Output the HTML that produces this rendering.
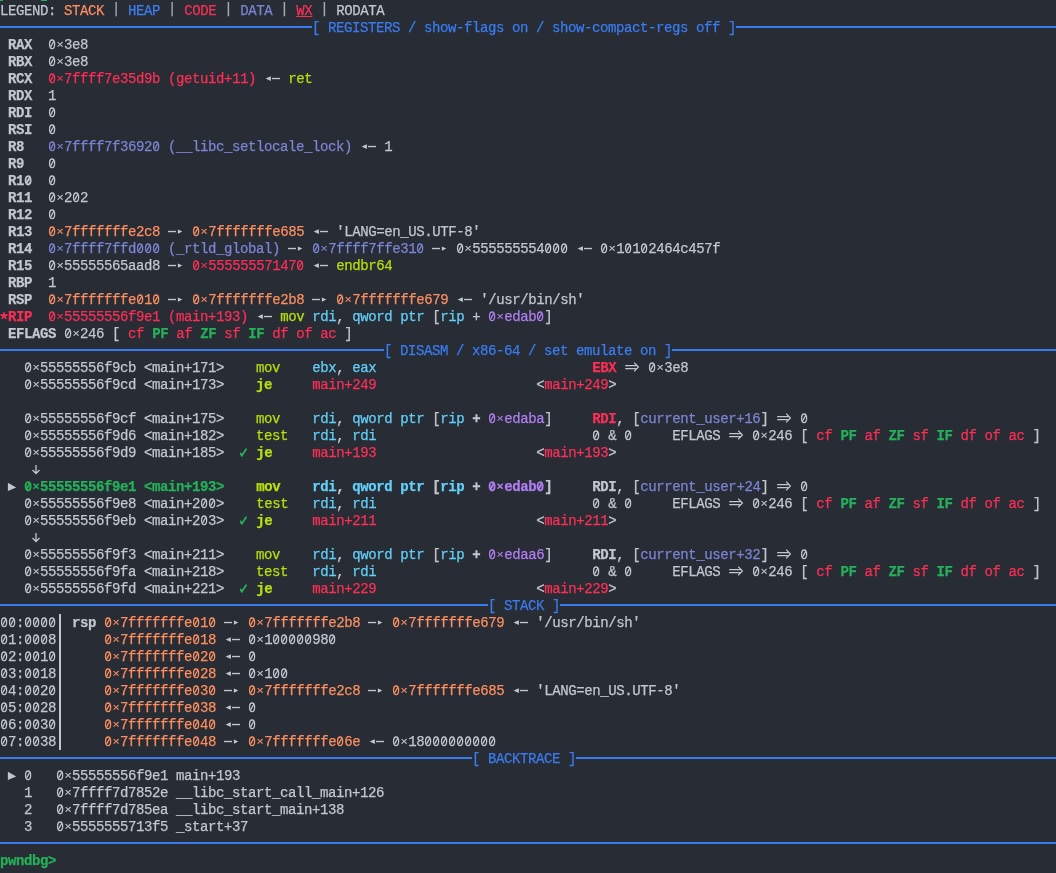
<!DOCTYPE html>
<html><head><meta charset="utf-8"><style>
html,body{margin:0;padding:0;background:#282c34;width:1056px;height:873px;overflow:hidden}
#s{position:relative;will-change:transform;width:1056px;height:873px;overflow:hidden;font-family:"Liberation Mono",monospace;font-size:14px;letter-spacing:-0.4px;-webkit-text-stroke:0.25px currentColor;}
.l{position:absolute;left:0;height:17px;line-height:17px;white-space:pre;color:#c3c6ce}
.g{color:#c3c6ce}.o{color:#fb8e60}.b{color:#3b7ff2}.r{color:#fb2f56}.d{color:#7c84d4}.y{color:#b8de0c}.c{color:#62cff8}.p{color:#b07ef0}.gr{color:#25b05a}
.B{font-weight:bold}
.z{display:inline-block;width:8px;height:17px;vertical-align:top}
.x{display:inline-block;font-weight:inherit;transform:translateY(0.2px) scale(.86,.8);transform-origin:50% 45%}
.u{text-decoration:underline}
.pipe{display:inline-block;transform:translateY(-2px);color:#a3a7b0}
.sp{display:inline-block;vertical-align:top;height:17px;font-style:normal}
.ra,.la,.dr{width:16px}.ck,.pt,.da,.as{width:8px}
.sp svg{display:block}
.rule{position:absolute;height:2px;background:#3a7cf0}
.rt{color:#3a7cf0}
.vb{position:absolute;left:59px;width:2px;background:#c3c6ce}
.dot{position:absolute;background:#25b05a;height:1px;top:0}
</style></head><body><div id="s">
<div class="l" style="top:3px"><span class="g">LEGEND: </span><span class="o">STACK</span><span class="g"> </span><span class="pipe">|</span><span class="g"> </span><span class="b">HEAP</span><span class="g"> </span><span class="pipe">|</span><span class="g"> </span><span class="r">CODE</span><span class="g"> </span><span class="pipe">|</span><span class="g"> </span><span class="d">DATA</span><span class="g"> </span><span class="pipe">|</span><span class="g"> </span><span class="r u">WX</span><span class="g"> </span><span class="pipe">|</span><span class="g"> </span><span class="g">RODATA</span></div>
<div class="rule" style="top:26px;left:0;width:312px"></div>
<div class="rule" style="top:26px;left:736px;width:320px"></div>
<div class="l rt" style="top:20px;left:312px">[ REGISTERS / show-flags on / show-compact-regs off ]</div>
<div class="l" style="top:37px"><span class="g"> </span><span class="B">RAX </span><span class="g"> </span><span class="g"><svg class="z" viewBox="0 0 8 17"><g fill="none" stroke="currentColor" stroke-width="1.3"><ellipse cx="4.1" cy="7.3" rx="2.55" ry="4.3"/><path d="M2.5 10.2L5.7 4.4"/></g></svg><b class="x">×</b>3e8</span></div>
<div class="l" style="top:54px"><span class="g"> </span><span class="B">RBX </span><span class="g"> </span><span class="g"><svg class="z" viewBox="0 0 8 17"><g fill="none" stroke="currentColor" stroke-width="1.3"><ellipse cx="4.1" cy="7.3" rx="2.55" ry="4.3"/><path d="M2.5 10.2L5.7 4.4"/></g></svg><b class="x">×</b>3e8</span></div>
<div class="l" style="top:71px"><span class="g"> </span><span class="B">RCX </span><span class="g"> </span><span class="r"><svg class="z" viewBox="0 0 8 17"><g fill="none" stroke="currentColor" stroke-width="1.3"><ellipse cx="4.1" cy="7.3" rx="2.55" ry="4.3"/><path d="M2.5 10.2L5.7 4.4"/></g></svg><b class="x">×</b>7ffff7e35d9b (getuid+11)</span><span class="g"> </span><i class="sp la g"><svg width="16" height="17" viewBox="0 0 16 17"><rect x="8" y="6.85" width="8" height="1.35" fill="currentColor"/><path d="M6.9 5.2 L1.6 7.55 L6.9 10 Z" fill="currentColor"/></svg></i><span class="g"> </span><span class="y">ret</span></div>
<div class="l" style="top:88px"><span class="g"> </span><span class="B">RDX </span><span class="g"> </span><span class="g">1</span></div>
<div class="l" style="top:105px"><span class="g"> </span><span class="B">RDI </span><span class="g"> </span><span class="g"><svg class="z" viewBox="0 0 8 17"><g fill="none" stroke="currentColor" stroke-width="1.3"><ellipse cx="4.1" cy="7.3" rx="2.55" ry="4.3"/><path d="M2.5 10.2L5.7 4.4"/></g></svg></span></div>
<div class="l" style="top:122px"><span class="g"> </span><span class="B">RSI </span><span class="g"> </span><span class="g"><svg class="z" viewBox="0 0 8 17"><g fill="none" stroke="currentColor" stroke-width="1.3"><ellipse cx="4.1" cy="7.3" rx="2.55" ry="4.3"/><path d="M2.5 10.2L5.7 4.4"/></g></svg></span></div>
<div class="l" style="top:139px"><span class="g"> </span><span class="B">R8  </span><span class="g"> </span><span class="d"><svg class="z" viewBox="0 0 8 17"><g fill="none" stroke="currentColor" stroke-width="1.3"><ellipse cx="4.1" cy="7.3" rx="2.55" ry="4.3"/><path d="M2.5 10.2L5.7 4.4"/></g></svg><b class="x">×</b>7ffff7f3692<svg class="z" viewBox="0 0 8 17"><g fill="none" stroke="currentColor" stroke-width="1.3"><ellipse cx="4.1" cy="7.3" rx="2.55" ry="4.3"/><path d="M2.5 10.2L5.7 4.4"/></g></svg> (__libc_setlocale_lock)</span><span class="g"> </span><i class="sp la g"><svg width="16" height="17" viewBox="0 0 16 17"><rect x="8" y="6.85" width="8" height="1.35" fill="currentColor"/><path d="M6.9 5.2 L1.6 7.55 L6.9 10 Z" fill="currentColor"/></svg></i><span class="g"> 1</span></div>
<div class="l" style="top:156px"><span class="g"> </span><span class="B">R9  </span><span class="g"> </span><span class="g"><svg class="z" viewBox="0 0 8 17"><g fill="none" stroke="currentColor" stroke-width="1.3"><ellipse cx="4.1" cy="7.3" rx="2.55" ry="4.3"/><path d="M2.5 10.2L5.7 4.4"/></g></svg></span></div>
<div class="l" style="top:173px"><span class="g"> </span><span class="B">R1<svg class="z" viewBox="0 0 8 17"><g fill="none" stroke="currentColor" stroke-width="1.9"><ellipse cx="4.1" cy="7.3" rx="2.5" ry="4.2"/><path d="M2.5 10.2L5.7 4.4"/></g></svg> </span><span class="g"> </span><span class="g"><svg class="z" viewBox="0 0 8 17"><g fill="none" stroke="currentColor" stroke-width="1.3"><ellipse cx="4.1" cy="7.3" rx="2.55" ry="4.3"/><path d="M2.5 10.2L5.7 4.4"/></g></svg></span></div>
<div class="l" style="top:190px"><span class="g"> </span><span class="B">R11 </span><span class="g"> </span><span class="g"><svg class="z" viewBox="0 0 8 17"><g fill="none" stroke="currentColor" stroke-width="1.3"><ellipse cx="4.1" cy="7.3" rx="2.55" ry="4.3"/><path d="M2.5 10.2L5.7 4.4"/></g></svg><b class="x">×</b>2<svg class="z" viewBox="0 0 8 17"><g fill="none" stroke="currentColor" stroke-width="1.3"><ellipse cx="4.1" cy="7.3" rx="2.55" ry="4.3"/><path d="M2.5 10.2L5.7 4.4"/></g></svg>2</span></div>
<div class="l" style="top:207px"><span class="g"> </span><span class="B">R12 </span><span class="g"> </span><span class="g"><svg class="z" viewBox="0 0 8 17"><g fill="none" stroke="currentColor" stroke-width="1.3"><ellipse cx="4.1" cy="7.3" rx="2.55" ry="4.3"/><path d="M2.5 10.2L5.7 4.4"/></g></svg></span></div>
<div class="l" style="top:224px"><span class="g"> </span><span class="B">R13 </span><span class="g"> </span><span class="o"><svg class="z" viewBox="0 0 8 17"><g fill="none" stroke="currentColor" stroke-width="1.3"><ellipse cx="4.1" cy="7.3" rx="2.55" ry="4.3"/><path d="M2.5 10.2L5.7 4.4"/></g></svg><b class="x">×</b>7fffffffe2c8</span><span class="g"> </span><i class="sp ra g"><svg width="16" height="17" viewBox="0 0 16 17"><rect x="0" y="6.85" width="8" height="1.35" fill="currentColor"/><path d="M9.9 5.4 L14.3 7.55 L9.9 9.8 Z" fill="currentColor"/></svg></i><span class="g"> </span><span class="o"><svg class="z" viewBox="0 0 8 17"><g fill="none" stroke="currentColor" stroke-width="1.3"><ellipse cx="4.1" cy="7.3" rx="2.55" ry="4.3"/><path d="M2.5 10.2L5.7 4.4"/></g></svg><b class="x">×</b>7fffffffe685</span><span class="g"> </span><i class="sp la g"><svg width="16" height="17" viewBox="0 0 16 17"><rect x="8" y="6.85" width="8" height="1.35" fill="currentColor"/><path d="M6.9 5.2 L1.6 7.55 L6.9 10 Z" fill="currentColor"/></svg></i><span class="g"> &#x27;LANG=en_US.UTF-8&#x27;</span></div>
<div class="l" style="top:241px"><span class="g"> </span><span class="B">R14 </span><span class="g"> </span><span class="d"><svg class="z" viewBox="0 0 8 17"><g fill="none" stroke="currentColor" stroke-width="1.3"><ellipse cx="4.1" cy="7.3" rx="2.55" ry="4.3"/><path d="M2.5 10.2L5.7 4.4"/></g></svg><b class="x">×</b>7ffff7ffd<svg class="z" viewBox="0 0 8 17"><g fill="none" stroke="currentColor" stroke-width="1.3"><ellipse cx="4.1" cy="7.3" rx="2.55" ry="4.3"/><path d="M2.5 10.2L5.7 4.4"/></g></svg><svg class="z" viewBox="0 0 8 17"><g fill="none" stroke="currentColor" stroke-width="1.3"><ellipse cx="4.1" cy="7.3" rx="2.55" ry="4.3"/><path d="M2.5 10.2L5.7 4.4"/></g></svg><svg class="z" viewBox="0 0 8 17"><g fill="none" stroke="currentColor" stroke-width="1.3"><ellipse cx="4.1" cy="7.3" rx="2.55" ry="4.3"/><path d="M2.5 10.2L5.7 4.4"/></g></svg> (_rtld_global)</span><span class="g"> </span><i class="sp ra g"><svg width="16" height="17" viewBox="0 0 16 17"><rect x="0" y="6.85" width="8" height="1.35" fill="currentColor"/><path d="M9.9 5.4 L14.3 7.55 L9.9 9.8 Z" fill="currentColor"/></svg></i><span class="g"> </span><span class="d"><svg class="z" viewBox="0 0 8 17"><g fill="none" stroke="currentColor" stroke-width="1.3"><ellipse cx="4.1" cy="7.3" rx="2.55" ry="4.3"/><path d="M2.5 10.2L5.7 4.4"/></g></svg><b class="x">×</b>7ffff7ffe31<svg class="z" viewBox="0 0 8 17"><g fill="none" stroke="currentColor" stroke-width="1.3"><ellipse cx="4.1" cy="7.3" rx="2.55" ry="4.3"/><path d="M2.5 10.2L5.7 4.4"/></g></svg></span><span class="g"> </span><i class="sp ra g"><svg width="16" height="17" viewBox="0 0 16 17"><rect x="0" y="6.85" width="8" height="1.35" fill="currentColor"/><path d="M9.9 5.4 L14.3 7.55 L9.9 9.8 Z" fill="currentColor"/></svg></i><span class="g"> <svg class="z" viewBox="0 0 8 17"><g fill="none" stroke="currentColor" stroke-width="1.3"><ellipse cx="4.1" cy="7.3" rx="2.55" ry="4.3"/><path d="M2.5 10.2L5.7 4.4"/></g></svg><b class="x">×</b>555555554<svg class="z" viewBox="0 0 8 17"><g fill="none" stroke="currentColor" stroke-width="1.3"><ellipse cx="4.1" cy="7.3" rx="2.55" ry="4.3"/><path d="M2.5 10.2L5.7 4.4"/></g></svg><svg class="z" viewBox="0 0 8 17"><g fill="none" stroke="currentColor" stroke-width="1.3"><ellipse cx="4.1" cy="7.3" rx="2.55" ry="4.3"/><path d="M2.5 10.2L5.7 4.4"/></g></svg><svg class="z" viewBox="0 0 8 17"><g fill="none" stroke="currentColor" stroke-width="1.3"><ellipse cx="4.1" cy="7.3" rx="2.55" ry="4.3"/><path d="M2.5 10.2L5.7 4.4"/></g></svg> </span><i class="sp la g"><svg width="16" height="17" viewBox="0 0 16 17"><rect x="8" y="6.85" width="8" height="1.35" fill="currentColor"/><path d="M6.9 5.2 L1.6 7.55 L6.9 10 Z" fill="currentColor"/></svg></i><span class="g"> <svg class="z" viewBox="0 0 8 17"><g fill="none" stroke="currentColor" stroke-width="1.3"><ellipse cx="4.1" cy="7.3" rx="2.55" ry="4.3"/><path d="M2.5 10.2L5.7 4.4"/></g></svg><b class="x">×</b>1<svg class="z" viewBox="0 0 8 17"><g fill="none" stroke="currentColor" stroke-width="1.3"><ellipse cx="4.1" cy="7.3" rx="2.55" ry="4.3"/><path d="M2.5 10.2L5.7 4.4"/></g></svg>1<svg class="z" viewBox="0 0 8 17"><g fill="none" stroke="currentColor" stroke-width="1.3"><ellipse cx="4.1" cy="7.3" rx="2.55" ry="4.3"/><path d="M2.5 10.2L5.7 4.4"/></g></svg>2464c457f</span></div>
<div class="l" style="top:258px"><span class="g"> </span><span class="B">R15 </span><span class="g"> </span><span class="g"><svg class="z" viewBox="0 0 8 17"><g fill="none" stroke="currentColor" stroke-width="1.3"><ellipse cx="4.1" cy="7.3" rx="2.55" ry="4.3"/><path d="M2.5 10.2L5.7 4.4"/></g></svg><b class="x">×</b>55555565aad8</span><span class="g"> </span><i class="sp ra g"><svg width="16" height="17" viewBox="0 0 16 17"><rect x="0" y="6.85" width="8" height="1.35" fill="currentColor"/><path d="M9.9 5.4 L14.3 7.55 L9.9 9.8 Z" fill="currentColor"/></svg></i><span class="g"> </span><span class="r"><svg class="z" viewBox="0 0 8 17"><g fill="none" stroke="currentColor" stroke-width="1.3"><ellipse cx="4.1" cy="7.3" rx="2.55" ry="4.3"/><path d="M2.5 10.2L5.7 4.4"/></g></svg><b class="x">×</b>55555557147<svg class="z" viewBox="0 0 8 17"><g fill="none" stroke="currentColor" stroke-width="1.3"><ellipse cx="4.1" cy="7.3" rx="2.55" ry="4.3"/><path d="M2.5 10.2L5.7 4.4"/></g></svg></span><span class="g"> </span><i class="sp la g"><svg width="16" height="17" viewBox="0 0 16 17"><rect x="8" y="6.85" width="8" height="1.35" fill="currentColor"/><path d="M6.9 5.2 L1.6 7.55 L6.9 10 Z" fill="currentColor"/></svg></i><span class="g"> </span><span class="y">endbr64</span></div>
<div class="l" style="top:275px"><span class="g"> </span><span class="B">RBP </span><span class="g"> </span><span class="g">1</span></div>
<div class="l" style="top:292px"><span class="g"> </span><span class="B">RSP </span><span class="g"> </span><span class="o"><svg class="z" viewBox="0 0 8 17"><g fill="none" stroke="currentColor" stroke-width="1.3"><ellipse cx="4.1" cy="7.3" rx="2.55" ry="4.3"/><path d="M2.5 10.2L5.7 4.4"/></g></svg><b class="x">×</b>7fffffffe<svg class="z" viewBox="0 0 8 17"><g fill="none" stroke="currentColor" stroke-width="1.3"><ellipse cx="4.1" cy="7.3" rx="2.55" ry="4.3"/><path d="M2.5 10.2L5.7 4.4"/></g></svg>1<svg class="z" viewBox="0 0 8 17"><g fill="none" stroke="currentColor" stroke-width="1.3"><ellipse cx="4.1" cy="7.3" rx="2.55" ry="4.3"/><path d="M2.5 10.2L5.7 4.4"/></g></svg></span><span class="g"> </span><i class="sp ra g"><svg width="16" height="17" viewBox="0 0 16 17"><rect x="0" y="6.85" width="8" height="1.35" fill="currentColor"/><path d="M9.9 5.4 L14.3 7.55 L9.9 9.8 Z" fill="currentColor"/></svg></i><span class="g"> </span><span class="o"><svg class="z" viewBox="0 0 8 17"><g fill="none" stroke="currentColor" stroke-width="1.3"><ellipse cx="4.1" cy="7.3" rx="2.55" ry="4.3"/><path d="M2.5 10.2L5.7 4.4"/></g></svg><b class="x">×</b>7fffffffe2b8</span><span class="g"> </span><i class="sp ra g"><svg width="16" height="17" viewBox="0 0 16 17"><rect x="0" y="6.85" width="8" height="1.35" fill="currentColor"/><path d="M9.9 5.4 L14.3 7.55 L9.9 9.8 Z" fill="currentColor"/></svg></i><span class="g"> </span><span class="o"><svg class="z" viewBox="0 0 8 17"><g fill="none" stroke="currentColor" stroke-width="1.3"><ellipse cx="4.1" cy="7.3" rx="2.55" ry="4.3"/><path d="M2.5 10.2L5.7 4.4"/></g></svg><b class="x">×</b>7fffffffe679</span><span class="g"> </span><i class="sp la g"><svg width="16" height="17" viewBox="0 0 16 17"><rect x="8" y="6.85" width="8" height="1.35" fill="currentColor"/><path d="M6.9 5.2 L1.6 7.55 L6.9 10 Z" fill="currentColor"/></svg></i><span class="g"> &#x27;/usr/bin/sh&#x27;</span></div>
<div class="l" style="top:309px"><i class="sp as r"><svg width="8" height="17" viewBox="0 0 8 17" style="overflow:visible" fill="none" stroke="currentColor" stroke-width="1.7" stroke-linecap="round"><path d="M4 6.8 V3.9 M4 6.8 L1.2 5.9 M4 6.8 L6.8 5.9 M4 6.8 L2.2 9.3 M4 6.8 L5.8 9.3"/></svg></i><span class="r B">RIP</span><span class="g">  </span><span class="r"><svg class="z" viewBox="0 0 8 17"><g fill="none" stroke="currentColor" stroke-width="1.3"><ellipse cx="4.1" cy="7.3" rx="2.55" ry="4.3"/><path d="M2.5 10.2L5.7 4.4"/></g></svg><b class="x">×</b>55555556f9e1 (main+193)</span><span class="g"> </span><i class="sp la g"><svg width="16" height="17" viewBox="0 0 16 17"><rect x="8" y="6.85" width="8" height="1.35" fill="currentColor"/><path d="M6.9 5.2 L1.6 7.55 L6.9 10 Z" fill="currentColor"/></svg></i><span class="g"> </span><span class="y">mov</span><span class="g"> </span><span class="c">rdi</span><span class="g">, </span><span class="c">qword ptr</span><span class="g"> [</span><span class="c">rip</span><span class="g"> + </span><span class="p"><svg class="z" viewBox="0 0 8 17"><g fill="none" stroke="currentColor" stroke-width="1.3"><ellipse cx="4.1" cy="7.3" rx="2.55" ry="4.3"/><path d="M2.5 10.2L5.7 4.4"/></g></svg><b class="x">×</b>edab<svg class="z" viewBox="0 0 8 17"><g fill="none" stroke="currentColor" stroke-width="1.3"><ellipse cx="4.1" cy="7.3" rx="2.55" ry="4.3"/><path d="M2.5 10.2L5.7 4.4"/></g></svg></span><span class="g">]</span></div>
<div class="l" style="top:326px"><span class="g"> </span><span class="B">EFLAGS</span><span class="g"> <svg class="z" viewBox="0 0 8 17"><g fill="none" stroke="currentColor" stroke-width="1.3"><ellipse cx="4.1" cy="7.3" rx="2.55" ry="4.3"/><path d="M2.5 10.2L5.7 4.4"/></g></svg><b class="x">×</b>246 </span><span class="g">[ </span><span class="r">cf</span><span class="g"> </span><span class="gr B">PF</span><span class="g"> </span><span class="r">af</span><span class="g"> </span><span class="gr B">ZF</span><span class="g"> </span><span class="r">sf</span><span class="g"> </span><span class="gr B">IF</span><span class="g"> </span><span class="r">df</span><span class="g"> </span><span class="r">of</span><span class="g"> </span><span class="r">ac</span><span class="g"> ]</span></div>
<div class="rule" style="top:349px;left:0;width:384px"></div>
<div class="rule" style="top:349px;left:672px;width:384px"></div>
<div class="l rt" style="top:343px;left:384px">[ DISASM / x86-64 / set emulate on ]</div>
<div class="l" style="top:360px"><span class="g">   </span><span class="g"><svg class="z" viewBox="0 0 8 17"><g fill="none" stroke="currentColor" stroke-width="1.3"><ellipse cx="4.1" cy="7.3" rx="2.55" ry="4.3"/><path d="M2.5 10.2L5.7 4.4"/></g></svg><b class="x">×</b>55555556f9cb</span><span class="g"> </span><span class="g">&lt;main+171&gt;</span><span class="g">    </span><span class="y">mov</span><span class="g">    </span><span class="c">ebx</span><span class="g">, </span><span class="c">eax</span><span class="g">                           </span><span class="r B">EBX</span><span class="g"> </span><i class="sp dr g"><svg width="16" height="17" viewBox="0 0 16 17" fill="none" stroke="currentColor" stroke-width="1.25"><path d="M1.2 5.5 H12.5 M1.2 8.5 H12.5 M10.2 2.6 L14.4 7 L10.2 11.4"/></svg></i><span class="g"> <svg class="z" viewBox="0 0 8 17"><g fill="none" stroke="currentColor" stroke-width="1.3"><ellipse cx="4.1" cy="7.3" rx="2.55" ry="4.3"/><path d="M2.5 10.2L5.7 4.4"/></g></svg><b class="x">×</b>3e8</span></div>
<div class="l" style="top:377px"><span class="g">   </span><span class="g"><svg class="z" viewBox="0 0 8 17"><g fill="none" stroke="currentColor" stroke-width="1.3"><ellipse cx="4.1" cy="7.3" rx="2.55" ry="4.3"/><path d="M2.5 10.2L5.7 4.4"/></g></svg><b class="x">×</b>55555556f9cd</span><span class="g"> </span><span class="g">&lt;main+173&gt;</span><span class="g">    </span><span class="y B">je</span><span class="g">     </span><span class="r">main+249</span><span class="g">                    </span><span class="g">&lt;</span><span class="r">main+249</span><span class="g">&gt;</span></div>
<div class="l" style="top:411px"><span class="g">   </span><span class="g"><svg class="z" viewBox="0 0 8 17"><g fill="none" stroke="currentColor" stroke-width="1.3"><ellipse cx="4.1" cy="7.3" rx="2.55" ry="4.3"/><path d="M2.5 10.2L5.7 4.4"/></g></svg><b class="x">×</b>55555556f9cf</span><span class="g"> </span><span class="g">&lt;main+175&gt;</span><span class="g">    </span><span class="y">mov</span><span class="g">    </span><span class="c">rdi</span><span class="g">, </span><span class="c">qword ptr</span><span class="g"> </span><span class="g">[</span><span class="c">rip</span><span class="g B"> + </span><span class="p"><svg class="z" viewBox="0 0 8 17"><g fill="none" stroke="currentColor" stroke-width="1.3"><ellipse cx="4.1" cy="7.3" rx="2.55" ry="4.3"/><path d="M2.5 10.2L5.7 4.4"/></g></svg><b class="x">×</b>edaba</span><span class="g">]</span><span class="g">     </span><span class="r B">RDI</span><span class="g">, [</span><span class="d">current_user+16</span><span class="g">] </span><i class="sp dr g"><svg width="16" height="17" viewBox="0 0 16 17" fill="none" stroke="currentColor" stroke-width="1.25"><path d="M1.2 5.5 H12.5 M1.2 8.5 H12.5 M10.2 2.6 L14.4 7 L10.2 11.4"/></svg></i><span class="g"> <svg class="z" viewBox="0 0 8 17"><g fill="none" stroke="currentColor" stroke-width="1.3"><ellipse cx="4.1" cy="7.3" rx="2.55" ry="4.3"/><path d="M2.5 10.2L5.7 4.4"/></g></svg></span></div>
<div class="l" style="top:428px"><span class="g">   </span><span class="g"><svg class="z" viewBox="0 0 8 17"><g fill="none" stroke="currentColor" stroke-width="1.3"><ellipse cx="4.1" cy="7.3" rx="2.55" ry="4.3"/><path d="M2.5 10.2L5.7 4.4"/></g></svg><b class="x">×</b>55555556f9d6</span><span class="g"> </span><span class="g">&lt;main+182&gt;</span><span class="g">    </span><span class="y">test</span><span class="g">   </span><span class="c">rdi</span><span class="g">, </span><span class="c">rdi</span><span class="g">                           </span><span class="g"><svg class="z" viewBox="0 0 8 17"><g fill="none" stroke="currentColor" stroke-width="1.3"><ellipse cx="4.1" cy="7.3" rx="2.55" ry="4.3"/><path d="M2.5 10.2L5.7 4.4"/></g></svg> &amp; <svg class="z" viewBox="0 0 8 17"><g fill="none" stroke="currentColor" stroke-width="1.3"><ellipse cx="4.1" cy="7.3" rx="2.55" ry="4.3"/><path d="M2.5 10.2L5.7 4.4"/></g></svg>     EFLAGS </span><i class="sp dr g"><svg width="16" height="17" viewBox="0 0 16 17" fill="none" stroke="currentColor" stroke-width="1.25"><path d="M1.2 5.5 H12.5 M1.2 8.5 H12.5 M10.2 2.6 L14.4 7 L10.2 11.4"/></svg></i><span class="g"> <svg class="z" viewBox="0 0 8 17"><g fill="none" stroke="currentColor" stroke-width="1.3"><ellipse cx="4.1" cy="7.3" rx="2.55" ry="4.3"/><path d="M2.5 10.2L5.7 4.4"/></g></svg><b class="x">×</b>246 </span><span class="g">[ </span><span class="r">cf</span><span class="g"> </span><span class="gr B">PF</span><span class="g"> </span><span class="r">af</span><span class="g"> </span><span class="gr B">ZF</span><span class="g"> </span><span class="r">sf</span><span class="g"> </span><span class="gr B">IF</span><span class="g"> </span><span class="r">df</span><span class="g"> </span><span class="r">of</span><span class="g"> </span><span class="r">ac</span><span class="g"> ]</span></div>
<div class="l" style="top:445px"><span class="g">   </span><span class="g"><svg class="z" viewBox="0 0 8 17"><g fill="none" stroke="currentColor" stroke-width="1.3"><ellipse cx="4.1" cy="7.3" rx="2.55" ry="4.3"/><path d="M2.5 10.2L5.7 4.4"/></g></svg><b class="x">×</b>55555556f9d9</span><span class="g"> </span><span class="g">&lt;main+185&gt;</span><span class="g">  </span><i class="sp ck gr"><svg width="8" height="17" viewBox="0 0 8 17" style="overflow:visible" fill="none" stroke="currentColor" stroke-width="1.8" stroke-linecap="round" stroke-linejoin="round"><path d="M0.7 8.4 L1.8 10.8 L6.1 4.2"/></svg></i><span class="g"> </span><span class="y B">je</span><span class="g">     </span><span class="r">main+193</span><span class="g">                    </span><span class="g">&lt;</span><span class="r">main+193</span><span class="g">&gt;</span></div>
<div class="l" style="top:462px"><span class="g">    </span><i class="sp da g"><svg width="8" height="17" viewBox="0 0 8 17" fill="none" stroke="currentColor" stroke-width="1.3"><path d="M4 3 V11.3 M0.5 8 L4 11.5 L7.5 8"/></svg></i></div>
<div class="l" style="top:479px"><span class="g"> </span><i class="sp pt g"><svg width="8" height="17" viewBox="0 0 8 17" style="overflow:visible"><path d="M-0.1 3.8 L8.2 8.5 L-0.1 12.1 Z" fill="currentColor"/></svg></i><span class="g"> </span><span class="gr B"><svg class="z" viewBox="0 0 8 17"><g fill="none" stroke="currentColor" stroke-width="1.9"><ellipse cx="4.1" cy="7.3" rx="2.5" ry="4.2"/><path d="M2.5 10.2L5.7 4.4"/></g></svg><b class="x">×</b>55555556f9e1</span><span class="gr B"> </span><span class="gr B">&lt;main+193&gt;</span><span class="g">    </span><span class="y B">mov</span><span class="g">    </span><span class="c B">rdi</span><span class="g B">, </span><span class="c B">qword ptr</span><span class="g B"> </span><span class="g B">[</span><span class="c B">rip</span><span class="g B"> + </span><span class="p B"><svg class="z" viewBox="0 0 8 17"><g fill="none" stroke="currentColor" stroke-width="1.9"><ellipse cx="4.1" cy="7.3" rx="2.5" ry="4.2"/><path d="M2.5 10.2L5.7 4.4"/></g></svg><b class="x">×</b>edab<svg class="z" viewBox="0 0 8 17"><g fill="none" stroke="currentColor" stroke-width="1.9"><ellipse cx="4.1" cy="7.3" rx="2.5" ry="4.2"/><path d="M2.5 10.2L5.7 4.4"/></g></svg></span><span class="g B">]</span><span class="g">     </span><span class="g B">RDI</span><span class="g">, [</span><span class="d">current_user+24</span><span class="g">] </span><i class="sp dr g"><svg width="16" height="17" viewBox="0 0 16 17" fill="none" stroke="currentColor" stroke-width="1.25"><path d="M1.2 5.5 H12.5 M1.2 8.5 H12.5 M10.2 2.6 L14.4 7 L10.2 11.4"/></svg></i><span class="g"> <svg class="z" viewBox="0 0 8 17"><g fill="none" stroke="currentColor" stroke-width="1.3"><ellipse cx="4.1" cy="7.3" rx="2.55" ry="4.3"/><path d="M2.5 10.2L5.7 4.4"/></g></svg></span></div>
<div class="l" style="top:496px"><span class="g">   </span><span class="g"><svg class="z" viewBox="0 0 8 17"><g fill="none" stroke="currentColor" stroke-width="1.3"><ellipse cx="4.1" cy="7.3" rx="2.55" ry="4.3"/><path d="M2.5 10.2L5.7 4.4"/></g></svg><b class="x">×</b>55555556f9e8</span><span class="g"> </span><span class="g">&lt;main+2<svg class="z" viewBox="0 0 8 17"><g fill="none" stroke="currentColor" stroke-width="1.3"><ellipse cx="4.1" cy="7.3" rx="2.55" ry="4.3"/><path d="M2.5 10.2L5.7 4.4"/></g></svg><svg class="z" viewBox="0 0 8 17"><g fill="none" stroke="currentColor" stroke-width="1.3"><ellipse cx="4.1" cy="7.3" rx="2.55" ry="4.3"/><path d="M2.5 10.2L5.7 4.4"/></g></svg>&gt;</span><span class="g">    </span><span class="y">test</span><span class="g">   </span><span class="c">rdi</span><span class="g">, </span><span class="c">rdi</span><span class="g">                           </span><span class="g"><svg class="z" viewBox="0 0 8 17"><g fill="none" stroke="currentColor" stroke-width="1.3"><ellipse cx="4.1" cy="7.3" rx="2.55" ry="4.3"/><path d="M2.5 10.2L5.7 4.4"/></g></svg> &amp; <svg class="z" viewBox="0 0 8 17"><g fill="none" stroke="currentColor" stroke-width="1.3"><ellipse cx="4.1" cy="7.3" rx="2.55" ry="4.3"/><path d="M2.5 10.2L5.7 4.4"/></g></svg>     EFLAGS </span><i class="sp dr g"><svg width="16" height="17" viewBox="0 0 16 17" fill="none" stroke="currentColor" stroke-width="1.25"><path d="M1.2 5.5 H12.5 M1.2 8.5 H12.5 M10.2 2.6 L14.4 7 L10.2 11.4"/></svg></i><span class="g"> <svg class="z" viewBox="0 0 8 17"><g fill="none" stroke="currentColor" stroke-width="1.3"><ellipse cx="4.1" cy="7.3" rx="2.55" ry="4.3"/><path d="M2.5 10.2L5.7 4.4"/></g></svg><b class="x">×</b>246 </span><span class="g">[ </span><span class="r">cf</span><span class="g"> </span><span class="gr B">PF</span><span class="g"> </span><span class="r">af</span><span class="g"> </span><span class="gr B">ZF</span><span class="g"> </span><span class="r">sf</span><span class="g"> </span><span class="gr B">IF</span><span class="g"> </span><span class="r">df</span><span class="g"> </span><span class="r">of</span><span class="g"> </span><span class="r">ac</span><span class="g"> ]</span></div>
<div class="l" style="top:513px"><span class="g">   </span><span class="g"><svg class="z" viewBox="0 0 8 17"><g fill="none" stroke="currentColor" stroke-width="1.3"><ellipse cx="4.1" cy="7.3" rx="2.55" ry="4.3"/><path d="M2.5 10.2L5.7 4.4"/></g></svg><b class="x">×</b>55555556f9eb</span><span class="g"> </span><span class="g">&lt;main+2<svg class="z" viewBox="0 0 8 17"><g fill="none" stroke="currentColor" stroke-width="1.3"><ellipse cx="4.1" cy="7.3" rx="2.55" ry="4.3"/><path d="M2.5 10.2L5.7 4.4"/></g></svg>3&gt;</span><span class="g">  </span><i class="sp ck gr"><svg width="8" height="17" viewBox="0 0 8 17" style="overflow:visible" fill="none" stroke="currentColor" stroke-width="1.8" stroke-linecap="round" stroke-linejoin="round"><path d="M0.7 8.4 L1.8 10.8 L6.1 4.2"/></svg></i><span class="g"> </span><span class="y B">je</span><span class="g">     </span><span class="r">main+211</span><span class="g">                    </span><span class="g">&lt;</span><span class="r">main+211</span><span class="g">&gt;</span></div>
<div class="l" style="top:530px"><span class="g">    </span><i class="sp da g"><svg width="8" height="17" viewBox="0 0 8 17" fill="none" stroke="currentColor" stroke-width="1.3"><path d="M4 3 V11.3 M0.5 8 L4 11.5 L7.5 8"/></svg></i></div>
<div class="l" style="top:547px"><span class="g">   </span><span class="g"><svg class="z" viewBox="0 0 8 17"><g fill="none" stroke="currentColor" stroke-width="1.3"><ellipse cx="4.1" cy="7.3" rx="2.55" ry="4.3"/><path d="M2.5 10.2L5.7 4.4"/></g></svg><b class="x">×</b>55555556f9f3</span><span class="g"> </span><span class="g">&lt;main+211&gt;</span><span class="g">    </span><span class="y">mov</span><span class="g">    </span><span class="c">rdi</span><span class="g">, </span><span class="c">qword ptr</span><span class="g"> </span><span class="g">[</span><span class="c">rip</span><span class="g B"> + </span><span class="p"><svg class="z" viewBox="0 0 8 17"><g fill="none" stroke="currentColor" stroke-width="1.3"><ellipse cx="4.1" cy="7.3" rx="2.55" ry="4.3"/><path d="M2.5 10.2L5.7 4.4"/></g></svg><b class="x">×</b>edaa6</span><span class="g">]</span><span class="g">     </span><span class="g B">RDI</span><span class="g">, [</span><span class="d">current_user+32</span><span class="g">] </span><i class="sp dr g"><svg width="16" height="17" viewBox="0 0 16 17" fill="none" stroke="currentColor" stroke-width="1.25"><path d="M1.2 5.5 H12.5 M1.2 8.5 H12.5 M10.2 2.6 L14.4 7 L10.2 11.4"/></svg></i><span class="g"> <svg class="z" viewBox="0 0 8 17"><g fill="none" stroke="currentColor" stroke-width="1.3"><ellipse cx="4.1" cy="7.3" rx="2.55" ry="4.3"/><path d="M2.5 10.2L5.7 4.4"/></g></svg></span></div>
<div class="l" style="top:564px"><span class="g">   </span><span class="g"><svg class="z" viewBox="0 0 8 17"><g fill="none" stroke="currentColor" stroke-width="1.3"><ellipse cx="4.1" cy="7.3" rx="2.55" ry="4.3"/><path d="M2.5 10.2L5.7 4.4"/></g></svg><b class="x">×</b>55555556f9fa</span><span class="g"> </span><span class="g">&lt;main+218&gt;</span><span class="g">    </span><span class="y">test</span><span class="g">   </span><span class="c">rdi</span><span class="g">, </span><span class="c">rdi</span><span class="g">                           </span><span class="g"><svg class="z" viewBox="0 0 8 17"><g fill="none" stroke="currentColor" stroke-width="1.3"><ellipse cx="4.1" cy="7.3" rx="2.55" ry="4.3"/><path d="M2.5 10.2L5.7 4.4"/></g></svg> &amp; <svg class="z" viewBox="0 0 8 17"><g fill="none" stroke="currentColor" stroke-width="1.3"><ellipse cx="4.1" cy="7.3" rx="2.55" ry="4.3"/><path d="M2.5 10.2L5.7 4.4"/></g></svg>     EFLAGS </span><i class="sp dr g"><svg width="16" height="17" viewBox="0 0 16 17" fill="none" stroke="currentColor" stroke-width="1.25"><path d="M1.2 5.5 H12.5 M1.2 8.5 H12.5 M10.2 2.6 L14.4 7 L10.2 11.4"/></svg></i><span class="g"> <svg class="z" viewBox="0 0 8 17"><g fill="none" stroke="currentColor" stroke-width="1.3"><ellipse cx="4.1" cy="7.3" rx="2.55" ry="4.3"/><path d="M2.5 10.2L5.7 4.4"/></g></svg><b class="x">×</b>246 </span><span class="g">[ </span><span class="r">cf</span><span class="g"> </span><span class="gr B">PF</span><span class="g"> </span><span class="r">af</span><span class="g"> </span><span class="gr B">ZF</span><span class="g"> </span><span class="r">sf</span><span class="g"> </span><span class="gr B">IF</span><span class="g"> </span><span class="r">df</span><span class="g"> </span><span class="r">of</span><span class="g"> </span><span class="r">ac</span><span class="g"> ]</span></div>
<div class="l" style="top:581px"><span class="g">   </span><span class="g"><svg class="z" viewBox="0 0 8 17"><g fill="none" stroke="currentColor" stroke-width="1.3"><ellipse cx="4.1" cy="7.3" rx="2.55" ry="4.3"/><path d="M2.5 10.2L5.7 4.4"/></g></svg><b class="x">×</b>55555556f9fd</span><span class="g"> </span><span class="g">&lt;main+221&gt;</span><span class="g">  </span><i class="sp ck gr"><svg width="8" height="17" viewBox="0 0 8 17" style="overflow:visible" fill="none" stroke="currentColor" stroke-width="1.8" stroke-linecap="round" stroke-linejoin="round"><path d="M0.7 8.4 L1.8 10.8 L6.1 4.2"/></svg></i><span class="g"> </span><span class="y B">je</span><span class="g">     </span><span class="r">main+229</span><span class="g">                    </span><span class="g">&lt;</span><span class="r">main+229</span><span class="g">&gt;</span></div>
<div class="rule" style="top:604px;left:0;width:488px"></div>
<div class="rule" style="top:604px;left:560px;width:496px"></div>
<div class="l rt" style="top:598px;left:488px">[ STACK ]</div>
<div class="l" style="top:615px"><span class="g"><svg class="z" viewBox="0 0 8 17"><g fill="none" stroke="currentColor" stroke-width="1.3"><ellipse cx="4.1" cy="7.3" rx="2.55" ry="4.3"/><path d="M2.5 10.2L5.7 4.4"/></g></svg><svg class="z" viewBox="0 0 8 17"><g fill="none" stroke="currentColor" stroke-width="1.3"><ellipse cx="4.1" cy="7.3" rx="2.55" ry="4.3"/><path d="M2.5 10.2L5.7 4.4"/></g></svg>:<svg class="z" viewBox="0 0 8 17"><g fill="none" stroke="currentColor" stroke-width="1.3"><ellipse cx="4.1" cy="7.3" rx="2.55" ry="4.3"/><path d="M2.5 10.2L5.7 4.4"/></g></svg><svg class="z" viewBox="0 0 8 17"><g fill="none" stroke="currentColor" stroke-width="1.3"><ellipse cx="4.1" cy="7.3" rx="2.55" ry="4.3"/><path d="M2.5 10.2L5.7 4.4"/></g></svg><svg class="z" viewBox="0 0 8 17"><g fill="none" stroke="currentColor" stroke-width="1.3"><ellipse cx="4.1" cy="7.3" rx="2.55" ry="4.3"/><path d="M2.5 10.2L5.7 4.4"/></g></svg><svg class="z" viewBox="0 0 8 17"><g fill="none" stroke="currentColor" stroke-width="1.3"><ellipse cx="4.1" cy="7.3" rx="2.55" ry="4.3"/><path d="M2.5 10.2L5.7 4.4"/></g></svg></span><span class="g"> </span><span class="B"> rsp </span><span class="o"><svg class="z" viewBox="0 0 8 17"><g fill="none" stroke="currentColor" stroke-width="1.3"><ellipse cx="4.1" cy="7.3" rx="2.55" ry="4.3"/><path d="M2.5 10.2L5.7 4.4"/></g></svg><b class="x">×</b>7fffffffe<svg class="z" viewBox="0 0 8 17"><g fill="none" stroke="currentColor" stroke-width="1.3"><ellipse cx="4.1" cy="7.3" rx="2.55" ry="4.3"/><path d="M2.5 10.2L5.7 4.4"/></g></svg>1<svg class="z" viewBox="0 0 8 17"><g fill="none" stroke="currentColor" stroke-width="1.3"><ellipse cx="4.1" cy="7.3" rx="2.55" ry="4.3"/><path d="M2.5 10.2L5.7 4.4"/></g></svg></span><span class="g"> </span><i class="sp ra g"><svg width="16" height="17" viewBox="0 0 16 17"><rect x="0" y="6.85" width="8" height="1.35" fill="currentColor"/><path d="M9.9 5.4 L14.3 7.55 L9.9 9.8 Z" fill="currentColor"/></svg></i><span class="g"> </span><span class="o"><svg class="z" viewBox="0 0 8 17"><g fill="none" stroke="currentColor" stroke-width="1.3"><ellipse cx="4.1" cy="7.3" rx="2.55" ry="4.3"/><path d="M2.5 10.2L5.7 4.4"/></g></svg><b class="x">×</b>7fffffffe2b8</span><span class="g"> </span><i class="sp ra g"><svg width="16" height="17" viewBox="0 0 16 17"><rect x="0" y="6.85" width="8" height="1.35" fill="currentColor"/><path d="M9.9 5.4 L14.3 7.55 L9.9 9.8 Z" fill="currentColor"/></svg></i><span class="g"> </span><span class="o"><svg class="z" viewBox="0 0 8 17"><g fill="none" stroke="currentColor" stroke-width="1.3"><ellipse cx="4.1" cy="7.3" rx="2.55" ry="4.3"/><path d="M2.5 10.2L5.7 4.4"/></g></svg><b class="x">×</b>7fffffffe679</span><span class="g"> </span><i class="sp la g"><svg width="16" height="17" viewBox="0 0 16 17"><rect x="8" y="6.85" width="8" height="1.35" fill="currentColor"/><path d="M6.9 5.2 L1.6 7.55 L6.9 10 Z" fill="currentColor"/></svg></i><span class="g"> &#x27;/usr/bin/sh&#x27;</span></div>
<div class="l" style="top:632px"><span class="g"><svg class="z" viewBox="0 0 8 17"><g fill="none" stroke="currentColor" stroke-width="1.3"><ellipse cx="4.1" cy="7.3" rx="2.55" ry="4.3"/><path d="M2.5 10.2L5.7 4.4"/></g></svg>1:<svg class="z" viewBox="0 0 8 17"><g fill="none" stroke="currentColor" stroke-width="1.3"><ellipse cx="4.1" cy="7.3" rx="2.55" ry="4.3"/><path d="M2.5 10.2L5.7 4.4"/></g></svg><svg class="z" viewBox="0 0 8 17"><g fill="none" stroke="currentColor" stroke-width="1.3"><ellipse cx="4.1" cy="7.3" rx="2.55" ry="4.3"/><path d="M2.5 10.2L5.7 4.4"/></g></svg><svg class="z" viewBox="0 0 8 17"><g fill="none" stroke="currentColor" stroke-width="1.3"><ellipse cx="4.1" cy="7.3" rx="2.55" ry="4.3"/><path d="M2.5 10.2L5.7 4.4"/></g></svg>8</span><span class="g"> </span><span class="g">     </span><span class="o"><svg class="z" viewBox="0 0 8 17"><g fill="none" stroke="currentColor" stroke-width="1.3"><ellipse cx="4.1" cy="7.3" rx="2.55" ry="4.3"/><path d="M2.5 10.2L5.7 4.4"/></g></svg><b class="x">×</b>7fffffffe<svg class="z" viewBox="0 0 8 17"><g fill="none" stroke="currentColor" stroke-width="1.3"><ellipse cx="4.1" cy="7.3" rx="2.55" ry="4.3"/><path d="M2.5 10.2L5.7 4.4"/></g></svg>18</span><span class="g"> </span><i class="sp la g"><svg width="16" height="17" viewBox="0 0 16 17"><rect x="8" y="6.85" width="8" height="1.35" fill="currentColor"/><path d="M6.9 5.2 L1.6 7.55 L6.9 10 Z" fill="currentColor"/></svg></i><span class="g"> <svg class="z" viewBox="0 0 8 17"><g fill="none" stroke="currentColor" stroke-width="1.3"><ellipse cx="4.1" cy="7.3" rx="2.55" ry="4.3"/><path d="M2.5 10.2L5.7 4.4"/></g></svg><b class="x">×</b>1<svg class="z" viewBox="0 0 8 17"><g fill="none" stroke="currentColor" stroke-width="1.3"><ellipse cx="4.1" cy="7.3" rx="2.55" ry="4.3"/><path d="M2.5 10.2L5.7 4.4"/></g></svg><svg class="z" viewBox="0 0 8 17"><g fill="none" stroke="currentColor" stroke-width="1.3"><ellipse cx="4.1" cy="7.3" rx="2.55" ry="4.3"/><path d="M2.5 10.2L5.7 4.4"/></g></svg><svg class="z" viewBox="0 0 8 17"><g fill="none" stroke="currentColor" stroke-width="1.3"><ellipse cx="4.1" cy="7.3" rx="2.55" ry="4.3"/><path d="M2.5 10.2L5.7 4.4"/></g></svg><svg class="z" viewBox="0 0 8 17"><g fill="none" stroke="currentColor" stroke-width="1.3"><ellipse cx="4.1" cy="7.3" rx="2.55" ry="4.3"/><path d="M2.5 10.2L5.7 4.4"/></g></svg><svg class="z" viewBox="0 0 8 17"><g fill="none" stroke="currentColor" stroke-width="1.3"><ellipse cx="4.1" cy="7.3" rx="2.55" ry="4.3"/><path d="M2.5 10.2L5.7 4.4"/></g></svg>98<svg class="z" viewBox="0 0 8 17"><g fill="none" stroke="currentColor" stroke-width="1.3"><ellipse cx="4.1" cy="7.3" rx="2.55" ry="4.3"/><path d="M2.5 10.2L5.7 4.4"/></g></svg></span></div>
<div class="l" style="top:649px"><span class="g"><svg class="z" viewBox="0 0 8 17"><g fill="none" stroke="currentColor" stroke-width="1.3"><ellipse cx="4.1" cy="7.3" rx="2.55" ry="4.3"/><path d="M2.5 10.2L5.7 4.4"/></g></svg>2:<svg class="z" viewBox="0 0 8 17"><g fill="none" stroke="currentColor" stroke-width="1.3"><ellipse cx="4.1" cy="7.3" rx="2.55" ry="4.3"/><path d="M2.5 10.2L5.7 4.4"/></g></svg><svg class="z" viewBox="0 0 8 17"><g fill="none" stroke="currentColor" stroke-width="1.3"><ellipse cx="4.1" cy="7.3" rx="2.55" ry="4.3"/><path d="M2.5 10.2L5.7 4.4"/></g></svg>1<svg class="z" viewBox="0 0 8 17"><g fill="none" stroke="currentColor" stroke-width="1.3"><ellipse cx="4.1" cy="7.3" rx="2.55" ry="4.3"/><path d="M2.5 10.2L5.7 4.4"/></g></svg></span><span class="g"> </span><span class="g">     </span><span class="o"><svg class="z" viewBox="0 0 8 17"><g fill="none" stroke="currentColor" stroke-width="1.3"><ellipse cx="4.1" cy="7.3" rx="2.55" ry="4.3"/><path d="M2.5 10.2L5.7 4.4"/></g></svg><b class="x">×</b>7fffffffe<svg class="z" viewBox="0 0 8 17"><g fill="none" stroke="currentColor" stroke-width="1.3"><ellipse cx="4.1" cy="7.3" rx="2.55" ry="4.3"/><path d="M2.5 10.2L5.7 4.4"/></g></svg>2<svg class="z" viewBox="0 0 8 17"><g fill="none" stroke="currentColor" stroke-width="1.3"><ellipse cx="4.1" cy="7.3" rx="2.55" ry="4.3"/><path d="M2.5 10.2L5.7 4.4"/></g></svg></span><span class="g"> </span><i class="sp la g"><svg width="16" height="17" viewBox="0 0 16 17"><rect x="8" y="6.85" width="8" height="1.35" fill="currentColor"/><path d="M6.9 5.2 L1.6 7.55 L6.9 10 Z" fill="currentColor"/></svg></i><span class="g"> <svg class="z" viewBox="0 0 8 17"><g fill="none" stroke="currentColor" stroke-width="1.3"><ellipse cx="4.1" cy="7.3" rx="2.55" ry="4.3"/><path d="M2.5 10.2L5.7 4.4"/></g></svg></span></div>
<div class="l" style="top:666px"><span class="g"><svg class="z" viewBox="0 0 8 17"><g fill="none" stroke="currentColor" stroke-width="1.3"><ellipse cx="4.1" cy="7.3" rx="2.55" ry="4.3"/><path d="M2.5 10.2L5.7 4.4"/></g></svg>3:<svg class="z" viewBox="0 0 8 17"><g fill="none" stroke="currentColor" stroke-width="1.3"><ellipse cx="4.1" cy="7.3" rx="2.55" ry="4.3"/><path d="M2.5 10.2L5.7 4.4"/></g></svg><svg class="z" viewBox="0 0 8 17"><g fill="none" stroke="currentColor" stroke-width="1.3"><ellipse cx="4.1" cy="7.3" rx="2.55" ry="4.3"/><path d="M2.5 10.2L5.7 4.4"/></g></svg>18</span><span class="g"> </span><span class="g">     </span><span class="o"><svg class="z" viewBox="0 0 8 17"><g fill="none" stroke="currentColor" stroke-width="1.3"><ellipse cx="4.1" cy="7.3" rx="2.55" ry="4.3"/><path d="M2.5 10.2L5.7 4.4"/></g></svg><b class="x">×</b>7fffffffe<svg class="z" viewBox="0 0 8 17"><g fill="none" stroke="currentColor" stroke-width="1.3"><ellipse cx="4.1" cy="7.3" rx="2.55" ry="4.3"/><path d="M2.5 10.2L5.7 4.4"/></g></svg>28</span><span class="g"> </span><i class="sp la g"><svg width="16" height="17" viewBox="0 0 16 17"><rect x="8" y="6.85" width="8" height="1.35" fill="currentColor"/><path d="M6.9 5.2 L1.6 7.55 L6.9 10 Z" fill="currentColor"/></svg></i><span class="g"> <svg class="z" viewBox="0 0 8 17"><g fill="none" stroke="currentColor" stroke-width="1.3"><ellipse cx="4.1" cy="7.3" rx="2.55" ry="4.3"/><path d="M2.5 10.2L5.7 4.4"/></g></svg><b class="x">×</b>1<svg class="z" viewBox="0 0 8 17"><g fill="none" stroke="currentColor" stroke-width="1.3"><ellipse cx="4.1" cy="7.3" rx="2.55" ry="4.3"/><path d="M2.5 10.2L5.7 4.4"/></g></svg><svg class="z" viewBox="0 0 8 17"><g fill="none" stroke="currentColor" stroke-width="1.3"><ellipse cx="4.1" cy="7.3" rx="2.55" ry="4.3"/><path d="M2.5 10.2L5.7 4.4"/></g></svg></span></div>
<div class="l" style="top:683px"><span class="g"><svg class="z" viewBox="0 0 8 17"><g fill="none" stroke="currentColor" stroke-width="1.3"><ellipse cx="4.1" cy="7.3" rx="2.55" ry="4.3"/><path d="M2.5 10.2L5.7 4.4"/></g></svg>4:<svg class="z" viewBox="0 0 8 17"><g fill="none" stroke="currentColor" stroke-width="1.3"><ellipse cx="4.1" cy="7.3" rx="2.55" ry="4.3"/><path d="M2.5 10.2L5.7 4.4"/></g></svg><svg class="z" viewBox="0 0 8 17"><g fill="none" stroke="currentColor" stroke-width="1.3"><ellipse cx="4.1" cy="7.3" rx="2.55" ry="4.3"/><path d="M2.5 10.2L5.7 4.4"/></g></svg>2<svg class="z" viewBox="0 0 8 17"><g fill="none" stroke="currentColor" stroke-width="1.3"><ellipse cx="4.1" cy="7.3" rx="2.55" ry="4.3"/><path d="M2.5 10.2L5.7 4.4"/></g></svg></span><span class="g"> </span><span class="g">     </span><span class="o"><svg class="z" viewBox="0 0 8 17"><g fill="none" stroke="currentColor" stroke-width="1.3"><ellipse cx="4.1" cy="7.3" rx="2.55" ry="4.3"/><path d="M2.5 10.2L5.7 4.4"/></g></svg><b class="x">×</b>7fffffffe<svg class="z" viewBox="0 0 8 17"><g fill="none" stroke="currentColor" stroke-width="1.3"><ellipse cx="4.1" cy="7.3" rx="2.55" ry="4.3"/><path d="M2.5 10.2L5.7 4.4"/></g></svg>3<svg class="z" viewBox="0 0 8 17"><g fill="none" stroke="currentColor" stroke-width="1.3"><ellipse cx="4.1" cy="7.3" rx="2.55" ry="4.3"/><path d="M2.5 10.2L5.7 4.4"/></g></svg></span><span class="g"> </span><i class="sp ra g"><svg width="16" height="17" viewBox="0 0 16 17"><rect x="0" y="6.85" width="8" height="1.35" fill="currentColor"/><path d="M9.9 5.4 L14.3 7.55 L9.9 9.8 Z" fill="currentColor"/></svg></i><span class="g"> </span><span class="o"><svg class="z" viewBox="0 0 8 17"><g fill="none" stroke="currentColor" stroke-width="1.3"><ellipse cx="4.1" cy="7.3" rx="2.55" ry="4.3"/><path d="M2.5 10.2L5.7 4.4"/></g></svg><b class="x">×</b>7fffffffe2c8</span><span class="g"> </span><i class="sp ra g"><svg width="16" height="17" viewBox="0 0 16 17"><rect x="0" y="6.85" width="8" height="1.35" fill="currentColor"/><path d="M9.9 5.4 L14.3 7.55 L9.9 9.8 Z" fill="currentColor"/></svg></i><span class="g"> </span><span class="o"><svg class="z" viewBox="0 0 8 17"><g fill="none" stroke="currentColor" stroke-width="1.3"><ellipse cx="4.1" cy="7.3" rx="2.55" ry="4.3"/><path d="M2.5 10.2L5.7 4.4"/></g></svg><b class="x">×</b>7fffffffe685</span><span class="g"> </span><i class="sp la g"><svg width="16" height="17" viewBox="0 0 16 17"><rect x="8" y="6.85" width="8" height="1.35" fill="currentColor"/><path d="M6.9 5.2 L1.6 7.55 L6.9 10 Z" fill="currentColor"/></svg></i><span class="g"> &#x27;LANG=en_US.UTF-8&#x27;</span></div>
<div class="l" style="top:700px"><span class="g"><svg class="z" viewBox="0 0 8 17"><g fill="none" stroke="currentColor" stroke-width="1.3"><ellipse cx="4.1" cy="7.3" rx="2.55" ry="4.3"/><path d="M2.5 10.2L5.7 4.4"/></g></svg>5:<svg class="z" viewBox="0 0 8 17"><g fill="none" stroke="currentColor" stroke-width="1.3"><ellipse cx="4.1" cy="7.3" rx="2.55" ry="4.3"/><path d="M2.5 10.2L5.7 4.4"/></g></svg><svg class="z" viewBox="0 0 8 17"><g fill="none" stroke="currentColor" stroke-width="1.3"><ellipse cx="4.1" cy="7.3" rx="2.55" ry="4.3"/><path d="M2.5 10.2L5.7 4.4"/></g></svg>28</span><span class="g"> </span><span class="g">     </span><span class="o"><svg class="z" viewBox="0 0 8 17"><g fill="none" stroke="currentColor" stroke-width="1.3"><ellipse cx="4.1" cy="7.3" rx="2.55" ry="4.3"/><path d="M2.5 10.2L5.7 4.4"/></g></svg><b class="x">×</b>7fffffffe<svg class="z" viewBox="0 0 8 17"><g fill="none" stroke="currentColor" stroke-width="1.3"><ellipse cx="4.1" cy="7.3" rx="2.55" ry="4.3"/><path d="M2.5 10.2L5.7 4.4"/></g></svg>38</span><span class="g"> </span><i class="sp la g"><svg width="16" height="17" viewBox="0 0 16 17"><rect x="8" y="6.85" width="8" height="1.35" fill="currentColor"/><path d="M6.9 5.2 L1.6 7.55 L6.9 10 Z" fill="currentColor"/></svg></i><span class="g"> <svg class="z" viewBox="0 0 8 17"><g fill="none" stroke="currentColor" stroke-width="1.3"><ellipse cx="4.1" cy="7.3" rx="2.55" ry="4.3"/><path d="M2.5 10.2L5.7 4.4"/></g></svg></span></div>
<div class="l" style="top:717px"><span class="g"><svg class="z" viewBox="0 0 8 17"><g fill="none" stroke="currentColor" stroke-width="1.3"><ellipse cx="4.1" cy="7.3" rx="2.55" ry="4.3"/><path d="M2.5 10.2L5.7 4.4"/></g></svg>6:<svg class="z" viewBox="0 0 8 17"><g fill="none" stroke="currentColor" stroke-width="1.3"><ellipse cx="4.1" cy="7.3" rx="2.55" ry="4.3"/><path d="M2.5 10.2L5.7 4.4"/></g></svg><svg class="z" viewBox="0 0 8 17"><g fill="none" stroke="currentColor" stroke-width="1.3"><ellipse cx="4.1" cy="7.3" rx="2.55" ry="4.3"/><path d="M2.5 10.2L5.7 4.4"/></g></svg>3<svg class="z" viewBox="0 0 8 17"><g fill="none" stroke="currentColor" stroke-width="1.3"><ellipse cx="4.1" cy="7.3" rx="2.55" ry="4.3"/><path d="M2.5 10.2L5.7 4.4"/></g></svg></span><span class="g"> </span><span class="g">     </span><span class="o"><svg class="z" viewBox="0 0 8 17"><g fill="none" stroke="currentColor" stroke-width="1.3"><ellipse cx="4.1" cy="7.3" rx="2.55" ry="4.3"/><path d="M2.5 10.2L5.7 4.4"/></g></svg><b class="x">×</b>7fffffffe<svg class="z" viewBox="0 0 8 17"><g fill="none" stroke="currentColor" stroke-width="1.3"><ellipse cx="4.1" cy="7.3" rx="2.55" ry="4.3"/><path d="M2.5 10.2L5.7 4.4"/></g></svg>4<svg class="z" viewBox="0 0 8 17"><g fill="none" stroke="currentColor" stroke-width="1.3"><ellipse cx="4.1" cy="7.3" rx="2.55" ry="4.3"/><path d="M2.5 10.2L5.7 4.4"/></g></svg></span><span class="g"> </span><i class="sp la g"><svg width="16" height="17" viewBox="0 0 16 17"><rect x="8" y="6.85" width="8" height="1.35" fill="currentColor"/><path d="M6.9 5.2 L1.6 7.55 L6.9 10 Z" fill="currentColor"/></svg></i><span class="g"> <svg class="z" viewBox="0 0 8 17"><g fill="none" stroke="currentColor" stroke-width="1.3"><ellipse cx="4.1" cy="7.3" rx="2.55" ry="4.3"/><path d="M2.5 10.2L5.7 4.4"/></g></svg></span></div>
<div class="l" style="top:734px"><span class="g"><svg class="z" viewBox="0 0 8 17"><g fill="none" stroke="currentColor" stroke-width="1.3"><ellipse cx="4.1" cy="7.3" rx="2.55" ry="4.3"/><path d="M2.5 10.2L5.7 4.4"/></g></svg>7:<svg class="z" viewBox="0 0 8 17"><g fill="none" stroke="currentColor" stroke-width="1.3"><ellipse cx="4.1" cy="7.3" rx="2.55" ry="4.3"/><path d="M2.5 10.2L5.7 4.4"/></g></svg><svg class="z" viewBox="0 0 8 17"><g fill="none" stroke="currentColor" stroke-width="1.3"><ellipse cx="4.1" cy="7.3" rx="2.55" ry="4.3"/><path d="M2.5 10.2L5.7 4.4"/></g></svg>38</span><span class="g"> </span><span class="g">     </span><span class="o"><svg class="z" viewBox="0 0 8 17"><g fill="none" stroke="currentColor" stroke-width="1.3"><ellipse cx="4.1" cy="7.3" rx="2.55" ry="4.3"/><path d="M2.5 10.2L5.7 4.4"/></g></svg><b class="x">×</b>7fffffffe<svg class="z" viewBox="0 0 8 17"><g fill="none" stroke="currentColor" stroke-width="1.3"><ellipse cx="4.1" cy="7.3" rx="2.55" ry="4.3"/><path d="M2.5 10.2L5.7 4.4"/></g></svg>48</span><span class="g"> </span><i class="sp ra g"><svg width="16" height="17" viewBox="0 0 16 17"><rect x="0" y="6.85" width="8" height="1.35" fill="currentColor"/><path d="M9.9 5.4 L14.3 7.55 L9.9 9.8 Z" fill="currentColor"/></svg></i><span class="g"> </span><span class="o"><svg class="z" viewBox="0 0 8 17"><g fill="none" stroke="currentColor" stroke-width="1.3"><ellipse cx="4.1" cy="7.3" rx="2.55" ry="4.3"/><path d="M2.5 10.2L5.7 4.4"/></g></svg><b class="x">×</b>7fffffffe<svg class="z" viewBox="0 0 8 17"><g fill="none" stroke="currentColor" stroke-width="1.3"><ellipse cx="4.1" cy="7.3" rx="2.55" ry="4.3"/><path d="M2.5 10.2L5.7 4.4"/></g></svg>6e</span><span class="g"> </span><i class="sp la g"><svg width="16" height="17" viewBox="0 0 16 17"><rect x="8" y="6.85" width="8" height="1.35" fill="currentColor"/><path d="M6.9 5.2 L1.6 7.55 L6.9 10 Z" fill="currentColor"/></svg></i><span class="g"> <svg class="z" viewBox="0 0 8 17"><g fill="none" stroke="currentColor" stroke-width="1.3"><ellipse cx="4.1" cy="7.3" rx="2.55" ry="4.3"/><path d="M2.5 10.2L5.7 4.4"/></g></svg><b class="x">×</b>18<svg class="z" viewBox="0 0 8 17"><g fill="none" stroke="currentColor" stroke-width="1.3"><ellipse cx="4.1" cy="7.3" rx="2.55" ry="4.3"/><path d="M2.5 10.2L5.7 4.4"/></g></svg><svg class="z" viewBox="0 0 8 17"><g fill="none" stroke="currentColor" stroke-width="1.3"><ellipse cx="4.1" cy="7.3" rx="2.55" ry="4.3"/><path d="M2.5 10.2L5.7 4.4"/></g></svg><svg class="z" viewBox="0 0 8 17"><g fill="none" stroke="currentColor" stroke-width="1.3"><ellipse cx="4.1" cy="7.3" rx="2.55" ry="4.3"/><path d="M2.5 10.2L5.7 4.4"/></g></svg><svg class="z" viewBox="0 0 8 17"><g fill="none" stroke="currentColor" stroke-width="1.3"><ellipse cx="4.1" cy="7.3" rx="2.55" ry="4.3"/><path d="M2.5 10.2L5.7 4.4"/></g></svg><svg class="z" viewBox="0 0 8 17"><g fill="none" stroke="currentColor" stroke-width="1.3"><ellipse cx="4.1" cy="7.3" rx="2.55" ry="4.3"/><path d="M2.5 10.2L5.7 4.4"/></g></svg><svg class="z" viewBox="0 0 8 17"><g fill="none" stroke="currentColor" stroke-width="1.3"><ellipse cx="4.1" cy="7.3" rx="2.55" ry="4.3"/><path d="M2.5 10.2L5.7 4.4"/></g></svg><svg class="z" viewBox="0 0 8 17"><g fill="none" stroke="currentColor" stroke-width="1.3"><ellipse cx="4.1" cy="7.3" rx="2.55" ry="4.3"/><path d="M2.5 10.2L5.7 4.4"/></g></svg><svg class="z" viewBox="0 0 8 17"><g fill="none" stroke="currentColor" stroke-width="1.3"><ellipse cx="4.1" cy="7.3" rx="2.55" ry="4.3"/><path d="M2.5 10.2L5.7 4.4"/></g></svg><svg class="z" viewBox="0 0 8 17"><g fill="none" stroke="currentColor" stroke-width="1.3"><ellipse cx="4.1" cy="7.3" rx="2.55" ry="4.3"/><path d="M2.5 10.2L5.7 4.4"/></g></svg></span></div>
<div class="rule" style="top:757px;left:0;width:472px"></div>
<div class="rule" style="top:757px;left:576px;width:480px"></div>
<div class="l rt" style="top:751px;left:472px">[ BACKTRACE ]</div>
<div class="l" style="top:768px"><span class="g"> </span><i class="sp pt g"><svg width="8" height="17" viewBox="0 0 8 17" style="overflow:visible"><path d="M-0.1 3.8 L8.2 8.5 L-0.1 12.1 Z" fill="currentColor"/></svg></i><span class="g"> <svg class="z" viewBox="0 0 8 17"><g fill="none" stroke="currentColor" stroke-width="1.3"><ellipse cx="4.1" cy="7.3" rx="2.55" ry="4.3"/><path d="M2.5 10.2L5.7 4.4"/></g></svg>   <svg class="z" viewBox="0 0 8 17"><g fill="none" stroke="currentColor" stroke-width="1.3"><ellipse cx="4.1" cy="7.3" rx="2.55" ry="4.3"/><path d="M2.5 10.2L5.7 4.4"/></g></svg><b class="x">×</b>55555556f9e1 main+193</span></div>
<div class="l" style="top:785px"><span class="g">   1   <svg class="z" viewBox="0 0 8 17"><g fill="none" stroke="currentColor" stroke-width="1.3"><ellipse cx="4.1" cy="7.3" rx="2.55" ry="4.3"/><path d="M2.5 10.2L5.7 4.4"/></g></svg><b class="x">×</b>7ffff7d7852e __libc_start_call_main+126</span></div>
<div class="l" style="top:802px"><span class="g">   2   <svg class="z" viewBox="0 0 8 17"><g fill="none" stroke="currentColor" stroke-width="1.3"><ellipse cx="4.1" cy="7.3" rx="2.55" ry="4.3"/><path d="M2.5 10.2L5.7 4.4"/></g></svg><b class="x">×</b>7ffff7d785ea __libc_start_main+138</span></div>
<div class="l" style="top:819px"><span class="g">   3   <svg class="z" viewBox="0 0 8 17"><g fill="none" stroke="currentColor" stroke-width="1.3"><ellipse cx="4.1" cy="7.3" rx="2.55" ry="4.3"/><path d="M2.5 10.2L5.7 4.4"/></g></svg><b class="x">×</b>5555555713f5 _start+37</span></div>
<div class="rule" style="top:842px;left:0;width:1056px"></div>
<div class="l" style="top:853px"><span class="gr B">pwndbg&gt; </span></div>
<div class="vb" style="top:614px;height:136px"></div>
<div class="dot" style="left:0;width:3px"></div><div class="dot" style="left:41px;width:6px"></div>
</div></body></html>
